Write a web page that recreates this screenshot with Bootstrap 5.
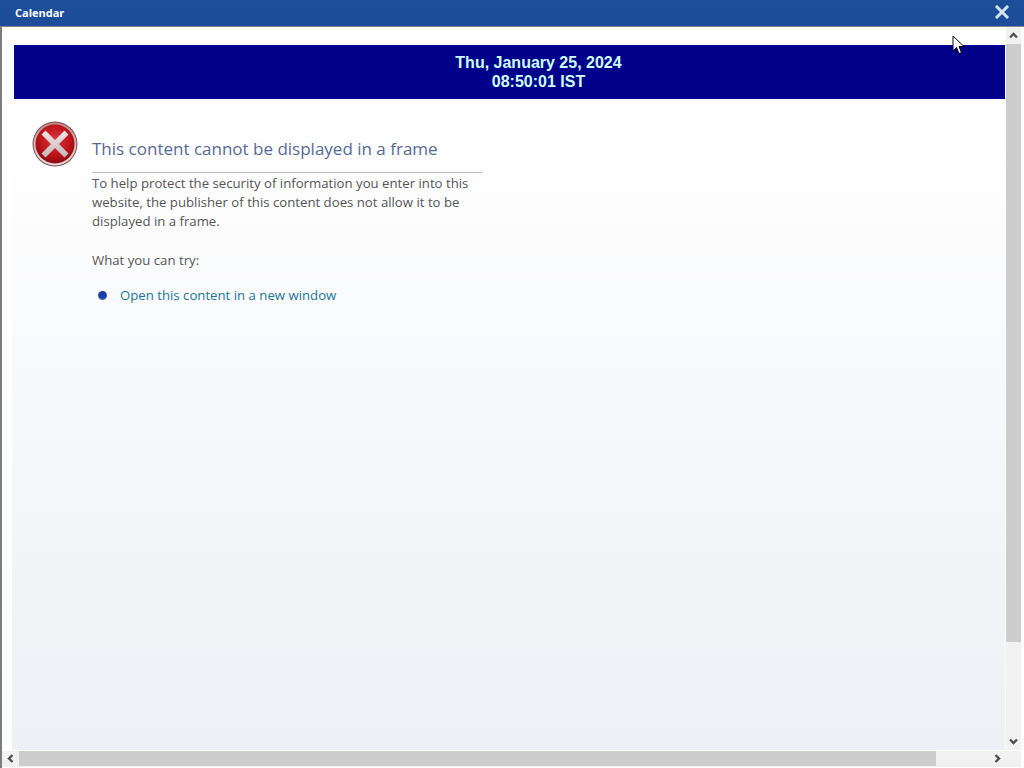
<!DOCTYPE html>
<html lang="en">
<head>
<meta charset="utf-8">
<title>Calendar</title>
<link href="https://cdn.jsdelivr.net/npm/bootstrap@5.3.0/dist/css/bootstrap.min.css" rel="stylesheet">
<style>
html,body{height:100%;margin:0;overflow:hidden;background:#fff}
.win{height:768px;width:1024px;position:relative}
.titlebar{height:27px;background:linear-gradient(180deg,#1d4f98,#1c4c9a);border-bottom:1px solid #7f8791;padding:0 15px 2px;font:700 11px "Open Sans",sans-serif;color:#fff}
.closex{width:14px;height:14px;display:block}
.winbody{height:741px;border-left:2px solid #7d7d7d;border-right:3px solid #fff}
.framearea{width:1004px}
.toparea{padding:18px 1px 0 12px;background:#fff}
.banner{height:54px;background:#00008b;color:#ccffff;font:700 16px/19px "Liberation Sans",sans-serif;padding:8px 0 0 58px}
.errpage{height:651px;margin:0 1px 0 10px;background:linear-gradient(180deg,#fff 0,#fff 5%,#eef0f5 100%);padding:22px 0 0 20px}
.erricon{width:46px;height:46px;flex:none}
.errtext{width:390px;margin-left:14px;font:13.2px/19px "Open Sans",sans-serif;color:#555}
.errhead{font:400 17px/24px "Open Sans",sans-serif;color:#566a96;margin:16px 0 0;padding-bottom:10px;border-bottom:1px solid #bdbdbd;height:36px}
.errpara{margin:1px 0 20px}
.trytext{margin:0 0 16px}
.bullet{width:9px;height:9px;border-radius:50%;background:radial-gradient(circle at 50% 40%,#1a3fa8 0 50%,#7ea4e0 100%);margin:0 13px 0 6px;flex:none}
.openlink{color:#1a7599;text-decoration:none}
.vbar{width:15px;height:723px;background:#f1f1f1}
.hbar{height:16px;background:#f1f1f1}
.arrowv{width:15px;height:17px}
.arrowh{width:16px;height:15px}
.arrowbtn{display:flex;align-items:center;justify-content:center;flex:none}
.arrowbtn svg{width:9px;height:9px}
.vthumb{height:598px;background:#cdcdcd}
.hleft{width:17px}
.htrack{width:970px;flex:none}
.hthumb{width:917px;height:15px;background:#cdcdcd}
.cursorimg{position:absolute;left:952px;top:35px;width:13px;height:20px}
</style>
</head>
<body>
<div class="win">
  <div class="titlebar d-flex align-items-center justify-content-between">
    <span>Calendar</span>
    <svg class="closex" viewBox="0 0 14 14"><path d="M2 2 L12 12 M12 2 L2 12" stroke="#d5e4f7" stroke-width="3" stroke-linecap="square" fill="none"/></svg>
  </div>
  <div class="winbody d-flex flex-wrap">
    <div class="framearea">
      <div class="toparea">
        <div class="banner text-center">Thu, January 25, 2024<br>08:50:01 IST</div>
      </div>
      <div class="errpage d-flex align-items-start">
        <svg class="erricon" viewBox="0 0 46 46">
          <defs>
            <radialGradient id="redg" cx="50%" cy="40%" r="60%"><stop offset="0" stop-color="#d8383e"/><stop offset=".6" stop-color="#c0161c"/><stop offset="1" stop-color="#8e0b10"/></radialGradient>
            <linearGradient id="ringg" x1="0" y1="0" x2="0" y2="1"><stop offset="0" stop-color="#c08a8a"/><stop offset="1" stop-color="#e8dede"/></linearGradient>
            <linearGradient id="crossg" x1="0" y1="0" x2="0" y2="1"><stop offset="0" stop-color="#efe6e6"/><stop offset="1" stop-color="#c4b6b6"/></linearGradient>
          </defs>
          <circle cx="23" cy="23" r="22.5" fill="#7e4f51"/>
          <circle cx="23" cy="23" r="21.5" fill="url(#ringg)"/>
          <circle cx="23" cy="23" r="19.5" fill="url(#redg)"/>
          <path d="M13.5 9.5 L23 19 L32.5 9.5 L36.5 13.5 L27 23 L36.5 32.5 L32.5 36.5 L23 27 L13.5 36.5 L9.5 32.5 L19 23 L9.5 13.5 Z" fill="url(#crossg)"/>
        </svg>
        <div class="errtext">
          <h1 class="errhead">This content cannot be displayed in a frame</h1>
          <p class="errpara">To help protect the security of information you enter into this website, the publisher of this content does not allow it to be displayed in a frame.</p>
          <p class="trytext">What you can try:</p>
          <div class="d-flex align-items-center"><span class="bullet"></span><a class="openlink" href="#">Open this content in a new window</a></div>
        </div>
      </div>
    </div>
    <div class="vbar d-flex flex-column">
      <div class="arrowbtn arrowv"><svg viewBox="0 0 9 9"><path d="M1 6.5 L4.5 3 L8 6.5" stroke="#505050" stroke-width="2.4" fill="none"/></svg></div>
      <div class="vthumb"></div>
      <div class="flex-grow-1"></div>
      <div class="arrowbtn arrowv"><svg viewBox="0 0 9 9"><path d="M1 2.5 L4.5 6 L8 2.5" stroke="#505050" stroke-width="2.4" fill="none"/></svg></div>
    </div>
    <div class="hbar d-flex w-100">
      <div class="arrowbtn arrowh hleft"><svg viewBox="0 0 9 9"><path d="M6.5 1 L3 4.5 L6.5 8" stroke="#505050" stroke-width="2.4" fill="none"/></svg></div>
      <div class="htrack"><div class="hthumb"></div></div>
      <div class="arrowbtn arrowh"><svg viewBox="0 0 9 9"><path d="M2.5 1 L6 4.5 L2.5 8" stroke="#505050" stroke-width="2.4" fill="none"/></svg></div>
    </div>
  </div>
  <svg class="cursorimg" viewBox="0 0 13 20"><path d="M1 1 L1 16 L4.5 12.5 L7 18.5 L9.5 17.5 L7 11.5 L12 11.5 Z" fill="#fff" stroke="#000" stroke-width="1"/></svg>
</div>
<script src="https://cdn.jsdelivr.net/npm/bootstrap@5.3.0/dist/js/bootstrap.bundle.min.js"></script>
</body>
</html>
